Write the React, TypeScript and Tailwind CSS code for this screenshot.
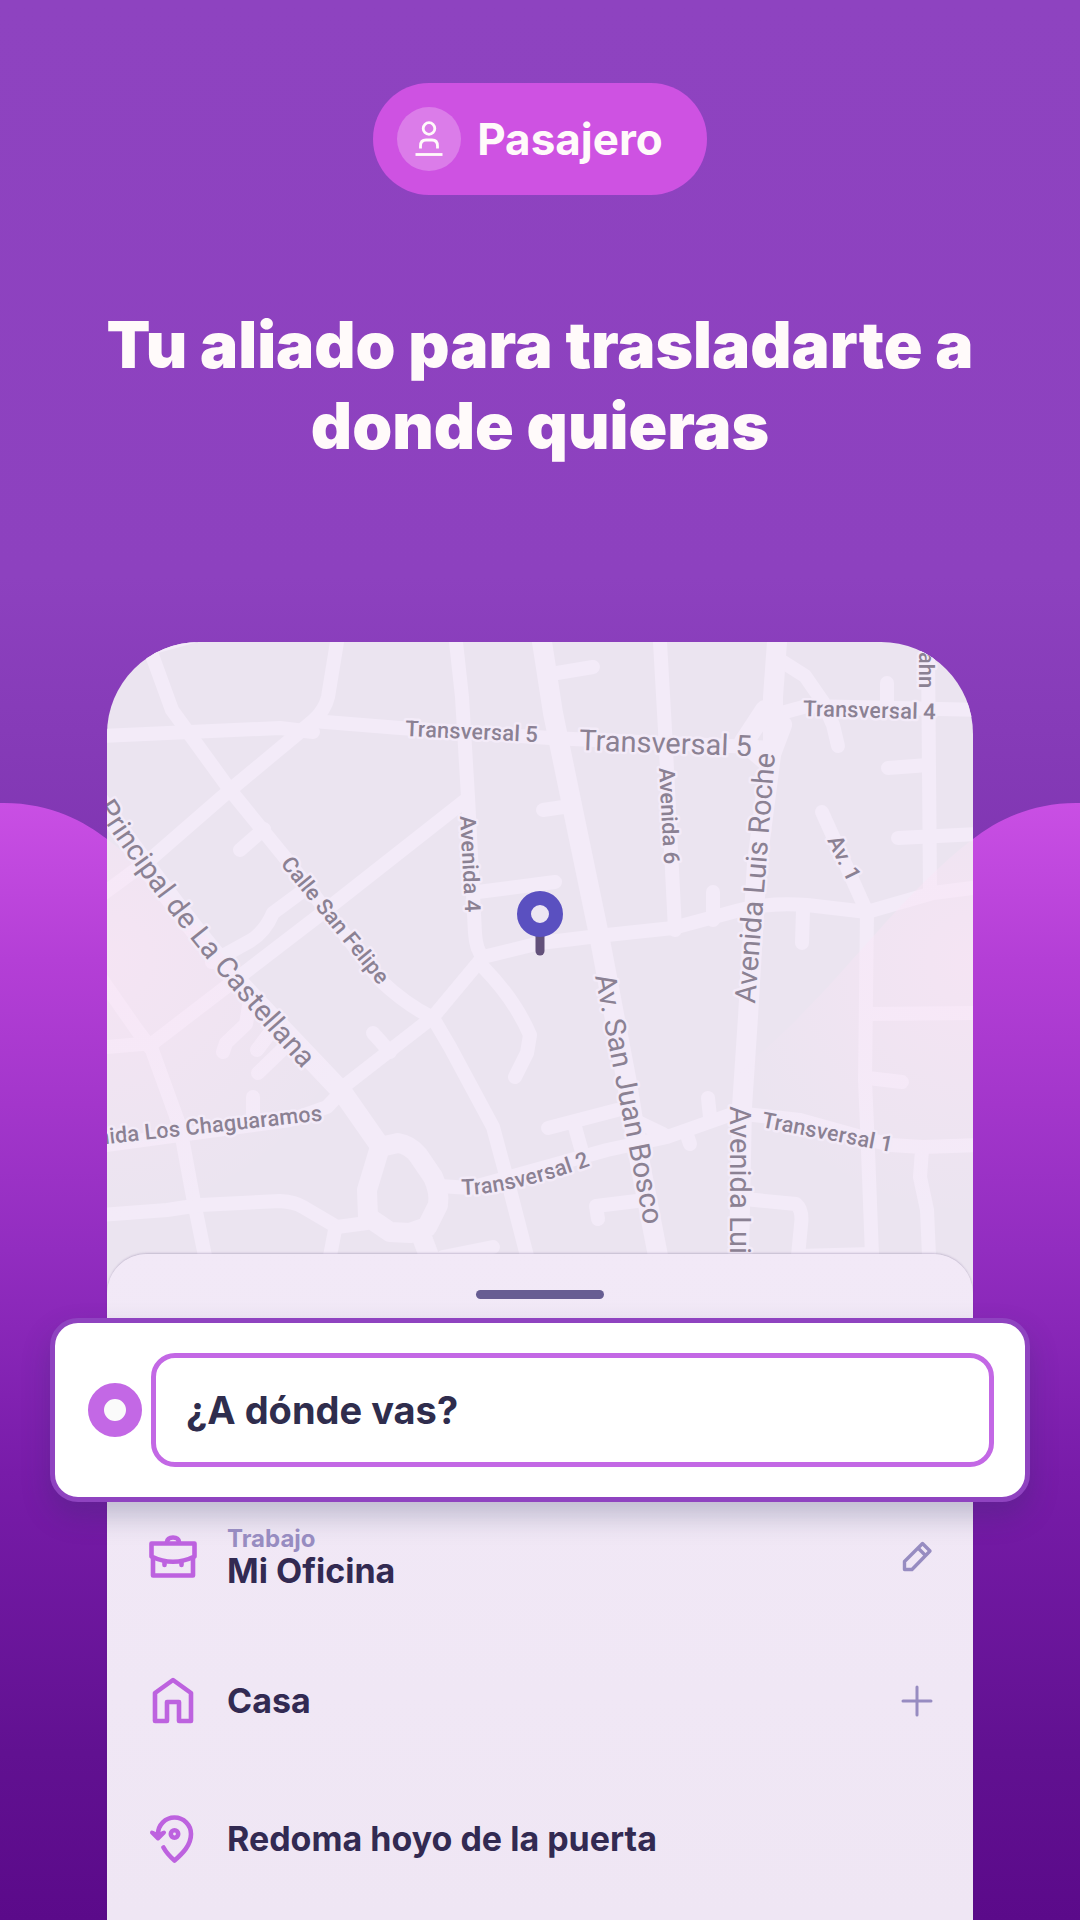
import { useState } from 'react';

const ROADS = {
  small: [
    'M152 655 L172 710 L230 790 L287 860 L380 980 Q405 1004 433 1018 L450 1047 L493 1127 L510 1190 L527 1256',
    'M337 642 L328 697 Q325 710 313 721 L230 790 L153 857 L100 896',
    'M150 648 L215 630',
    'M100 736 L280 728 L313 732',
    'M313 721 L400 728 L550 738 L773 748',
    'M456 642 L462 697 L468 797 L475 933 Q476 950 483 957',
    'M467 799 L317 917 L153 1043 L107 1047',
    'M300 893 L273 913 Q265 932 250 941 L212 962',
    'M264 829 L240 850',
    'M100 977 L137 1030 L152 1050 L180 1127 L193 1197 L205 1256',
    'M100 1215 L167 1210 L200 1205 L280 1201 Q295 1202 303 1207 L337 1227 L367 1223',
    'M335 1230 L330 1256',
    'M493 1247 L443 1257',
    'M343 1090 L327 1107 L290 1120 L100 1146',
    'M483 957 L433 1017 L343 1087',
    'M483 957 L540 943 L607 935 L673 928 L740 910 Q770 902 807 905 L867 912 L933 893 L980 887',
    'M484 968 Q515 1000 530 1035 L527 1053 L515 1077',
    'M390 1052 L373 1033',
    'M478 892 L555 882',
    'M543 810 L570 806',
    'M557 673 L593 667',
    'M660 642 L665 730 L675 930',
    'M783 662 L805 676 L823 702 L833 725 L838 746',
    'M785 712 L807 706 L980 710',
    'M887 683 L887 706',
    'M928 650 L930 890',
    'M888 768 L928 765',
    'M898 838 L980 834',
    'M822 812 L866 910',
    'M713 892 L713 920',
    'M803 910 L802 943',
    'M867 912 L865 1080 L868 1150 L872 1256',
    'M870 1014 L980 1013',
    'M868 1078 L902 1082',
    'M922 1150 L920 1177 L927 1210 L929 1256',
    'M745 1199 L796 1204 Q803 1210 801 1225 L798 1256',
    'M798 1256 L872 1254',
    'M548 1128 L617 1110',
    'M575 1127 L582 1152',
    'M708 1098 L710 1117',
    'M687 1135 L690 1144',
    'M598 1219 L596 1206 L637 1201',
    'M638 1122 L663 1134',
    'M223 1052 L226 1043 L246 1024 L250 1000',
    'M257 1050 L272 1030',
    'M258 1073 L285 1047',
    'M253 1097 L253 1120',
    'M440 1186 L470 1188 L607 1150 L667 1137 L735 1113 L800 1120 L890 1145 L923 1147 L980 1145',
  ],
  large: [
    'M95 795 Q190 930 250 995 L343 1093 L380 1146',
    'M380 1147 L398 1143 Q410 1145 418 1155 L433 1177 Q440 1192 438 1205 L427 1227 L410 1233 L390 1232 L368 1217 L367 1190 Z',
    'M420 1232 L429 1256',
    'M542 642 L553 713 L573 810 L600 940 L627 1083 L640 1163 L658 1256',
    'M777 642 L773 697 L773 740 L757 863 L748 1017 L742 1107 L739 1256',
    'M765 710 L744 742 L768 762 L782 725 Z',
  ],
};

const LABELS = [
  { text: 'Transversal 5', d: 'M405 736 L605 745', size: 'sm' },
  { text: 'Transversal 5', d: 'M579 750 L829 759', size: 'lg' },
  { text: 'Transversal 4', d: 'M803 716 L960 720', size: 'sm' },
  { text: 'Avenida 4', d: 'M460 816 L468 966', size: 'sm' },
  { text: 'Avenida 6', d: 'M659 768 L667 918', size: 'sm' },
  { text: 'Av. 1', d: 'M827 840 L867 922', size: 'sm' },
  { text: 'ahn', d: 'M919 652 L919 752', size: 'sm' },
  { text: 'Avenida Luis Roche', d: 'M755 1004 L779 704', size: 'lg' },
  { text: 'Principal de La Castellana', d: 'M96 808 Q178 936 324 1092', size: 'lg' },
  { text: 'Calle San Felipe', d: 'M280 864 L407 1020', size: 'sm' },
  { text: 'nida Los Chaguaramos', d: 'M98 1145 L400 1112', size: 'sm' },
  { text: 'Av. San Juan Bosco', d: 'M595 976 L653 1270', size: 'lg' },
  { text: 'Avenida Luis', d: 'M730 1106 L730 1306', size: 'lg' },
  { text: 'Transversal 1', d: 'M761 1127 L911 1156', size: 'sm' },
  { text: 'Transversal 2', d: 'M462 1195 Q520 1194 615 1156', size: 'sm' },
];

function Backdrop() {
  return (
    <svg className="absolute inset-0 h-full w-full" viewBox="0 0 1080 1920" preserveAspectRatio="none" aria-hidden="true">
      <defs>
        <linearGradient id="sky" x1="0" y1="0" x2="0" y2="1">
          <stop offset="0" stopColor="#8e43c0" />
          <stop offset="0.3" stopColor="#8d41bf" />
          <stop offset="0.46" stopColor="#7f35b1" />
        </linearGradient>
        <linearGradient id="hill" gradientUnits="userSpaceOnUse" x1="0" y1="803" x2="0" y2="1920">
          <stop offset="0" stopColor="#c94fe4" />
          <stop offset="0.14" stopColor="#b43fd6" />
          <stop offset="0.4" stopColor="#922dc0" />
          <stop offset="0.6" stopColor="#781ca9" />
          <stop offset="0.85" stopColor="#611191" />
          <stop offset="1" stopColor="#5b0a8a" />
        </linearGradient>
      </defs>
      <rect width="1080" height="1920" fill="url(#sky)" />
      <path
        d="M0 803 C50 802 85 822 107 839 C200 910 360 1150 540 1150 C720 1150 880 910 973 839 C995 822 1030 802 1080 803 V1920 H0 Z"
        fill="url(#hill)"
      />
    </svg>
  );
}

function StreetMap() {
  return (
    <svg
      className="block h-[660px] w-full bg-[#ebe4f0]"
      viewBox="107 642 866 660"
      preserveAspectRatio="xMidYMin slice"
      role="img"
      aria-label="Mapa"
    >
      <defs>
        <radialGradient id="glow-left" gradientUnits="userSpaceOnUse" cx="107" cy="960" r="260">
          <stop offset="0" stopColor="#fbe4f6" stopOpacity="0.6" />
          <stop offset="1" stopColor="#fbe4f6" stopOpacity="0" />
        </radialGradient>
        <radialGradient id="glow-right" gradientUnits="userSpaceOnUse" cx="973" cy="960" r="260">
          <stop offset="0" stopColor="#fbe4f6" stopOpacity="0.6" />
          <stop offset="1" stopColor="#fbe4f6" stopOpacity="0" />
        </radialGradient>
      </defs>
      <g fill="none" stroke="#f3ebf8" strokeLinecap="round" strokeLinejoin="round">
        {ROADS.small.map((d) => (
          <path key={d} d={d} strokeWidth="14" />
        ))}
        {ROADS.large.map((d) => (
          <path key={d} d={d} strokeWidth="20" />
        ))}
      </g>
      <path d="M107 839 C200 910 260 1020 380 1100 V1260 H107 Z" fill="url(#glow-left)" />
      <path d="M973 839 C880 910 820 1020 700 1100 V1260 H973 Z" fill="url(#glow-right)" />
      {LABELS.map((label, i) => (
        <g key={i}>
          <path id={`street-${i}`} d={label.d} fill="none" />
          <text
            className={label.size === 'lg' ? 'text-[29px]' : 'text-[22px] font-medium'}
            fontFamily="Roboto, sans-serif"
            fill="#8b8193"
            stroke="#f3ebf8"
            strokeWidth="5"
            strokeLinejoin="round"
            paintOrder="stroke"
          >
            <textPath href={`#street-${i}`}>{label.text}</textPath>
          </text>
        </g>
      ))}
      {/* Pin */}
      <path d="M540 932 V951" stroke="#62507a" strokeWidth="9" strokeLinecap="round" />
      <circle cx="540" cy="914" r="16" fill="#ece6f3" stroke="#5a50c0" strokeWidth="14" />
    </svg>
  );
}

function PassengerIcon() {
  return (
    <svg className="h-9 w-9" viewBox="0 0 36 36" fill="none" stroke="#fffafa" strokeWidth="2.8" aria-hidden="true">
      <circle cx="18" cy="7.500" r="5.800" />
      <path d="M9.500 27.500 V25 Q9.500 19 15 19 H21 Q26.500 19 26.500 25 V27.500" />
      <path d="M4.500 33.500 H31.500" />
    </svg>
  );
}

function BriefcaseIcon() {
  return (
    <svg viewBox="0 0 48 48" className="h-12 w-12 shrink-0" fill="none" stroke="#bd62df" strokeWidth="4.600" strokeLinejoin="round" strokeLinecap="round" aria-hidden="true">
      <path d="M2.500 10.500 H45.500 V23.500 Q24 34 2.500 23.500 Z" />
      <path d="M4 25 V42.500 H44 V25" />
      <path d="M18 9 Q18.500 4.500 24 4.500 Q29.500 4.500 30 9" />
      <path d="M15.500 29 V32 M32.500 29 V32" />
    </svg>
  );
}

function HouseIcon() {
  return (
    <svg viewBox="0 0 48 48" className="h-12 w-12 shrink-0" fill="none" stroke="#bd62df" strokeWidth="4.600" strokeLinejoin="round" strokeLinecap="round" aria-hidden="true">
      <path d="M24 3 L42 16 V44 H30 V25 H18 V44 H6 V16 Z" />
    </svg>
  );
}

function RecentIcon() {
  return (
    <svg viewBox="0 0 48 48" className="h-12 w-12 shrink-0" fill="none" stroke="#bd62df" strokeWidth="4.600" strokeLinejoin="round" strokeLinecap="round" aria-hidden="true">
      <path d="M9 22 V19 A16.500 16.500 0 0 1 42 19 C42 30 34 38 25.500 45.500 Q18 39 14.500 32.500" />
      <path d="M3 17.500 L9 23.500 L15 17.500 L9 20 Z" fill="#bd62df" strokeWidth="4" />
      <circle cx="25.500" cy="19" r="3.700" />
    </svg>
  );
}

function PencilIcon() {
  return (
    <svg viewBox="0 0 32 32" className="h-8 w-8" fill="none" stroke="#978cc1" strokeWidth="3.400" strokeLinejoin="round" aria-hidden="true">
      <path d="M3.500 28.500 V20.500 L21.500 2.500 L29 10 L11 28.500 Z" />
      <path d="M17 7 L24.500 14.500" />
    </svg>
  );
}

function PlusIcon() {
  return (
    <svg viewBox="0 0 32 32" className="h-8 w-8" fill="none" stroke="#978cc1" strokeWidth="3" strokeLinecap="round" aria-hidden="true">
      <path d="M16 2 V30 M2 16 H30" />
    </svg>
  );
}

const PLACES = [
  { name: 'Mi Oficina', tag: 'Trabajo', Icon: BriefcaseIcon, Action: PencilIcon, actionLabel: 'Editar Mi Oficina' },
  { name: 'Casa', Icon: HouseIcon, Action: PlusIcon, actionLabel: 'Agregar Casa' },
  { name: 'Redoma hoyo de la puerta', Icon: RecentIcon },
];

export default function App() {
  const [destination, setDestination] = useState('');

  return (
    <main className="relative flex min-h-screen flex-col overflow-hidden bg-[#5b0a8a] font-['Inter',sans-serif]">
      <Backdrop />

      {/* Header */}
      <header className="relative flex flex-col items-center pt-[83px]">
        <div className="flex h-28 items-center gap-4 rounded-[56px] bg-[#ce52e2] pr-11 pl-6">
          <div className="flex h-16 w-16 items-center justify-center rounded-full bg-[#db7ce9]">
            <PassengerIcon />
          </div>
          <span className="text-[44px] leading-none font-bold text-[#fffafa]">Pasajero</span>
        </div>
        <h1 className="mt-[109px] px-12 text-center text-[64px] leading-[81px] font-black text-[#fffafa]">
          Tu aliado para trasladarte a
          <br />
          donde quieras
        </h1>
      </header>

      {/* Phone panel */}
      <section className="relative mx-[107px] mt-44 flex grow flex-col">
        <div className="overflow-hidden rounded-t-[92px]">
          <StreetMap />
        </div>

        <div className="-mt-12 flex grow flex-col rounded-t-[40px] bg-linear-to-b from-[#f2e9f7] to-[#efe6f4] shadow-[0_-1px_2px_rgba(80,60,110,0.25)]">
          <div className="mx-auto mt-9 h-[9px] w-32 rounded-full bg-[#675d92]" />

          <div className="-mx-[57px] mt-[19px] flex items-center gap-[9px] rounded-[28px] border-5 border-[#8f43c0] bg-white py-[30px] pr-[31px] pl-[33px] shadow-[0_14px_28px_rgba(40,50,90,0.25)]">
            <span className="h-[54px] w-[54px] shrink-0 rounded-full border-16 border-[#c368e5] bg-[#fafafa]" />
            <input
              type="text"
              aria-label="Destino"
              placeholder="¿A dónde vas?"
              value={destination}
              onChange={(e) => setDestination(e.target.value)}
              className="h-[114px] min-w-0 grow rounded-3xl border-5 border-[#c368e5] bg-white px-[30px] text-[38px] font-bold text-[#2f2d4d] outline-none placeholder:text-[#2f2d4d] placeholder:opacity-100"
            />
          </div>

          <ul className="flex flex-col gap-[66px] pt-[13px] pr-10 pb-[45px] pl-[42px]">
            {PLACES.map(({ name, tag, Icon, Action, actionLabel }) => (
              <li key={name} className={`flex items-center gap-[30px] ${tag ? 'h-[84px]' : 'h-[72px]'}`}>
                <Icon />
                <div className="grow">
                  {tag && <p className="text-2xl leading-7 font-bold text-[#978cc1]">{tag}</p>}
                  <p className="text-[34px] leading-9 font-bold text-[#322a52]">{name}</p>
                </div>
                {Action && (
                  <button type="button" aria-label={actionLabel}>
                    <Action />
                  </button>
                )}
              </li>
            ))}
          </ul>
        </div>
      </section>
    </main>
  );
}
